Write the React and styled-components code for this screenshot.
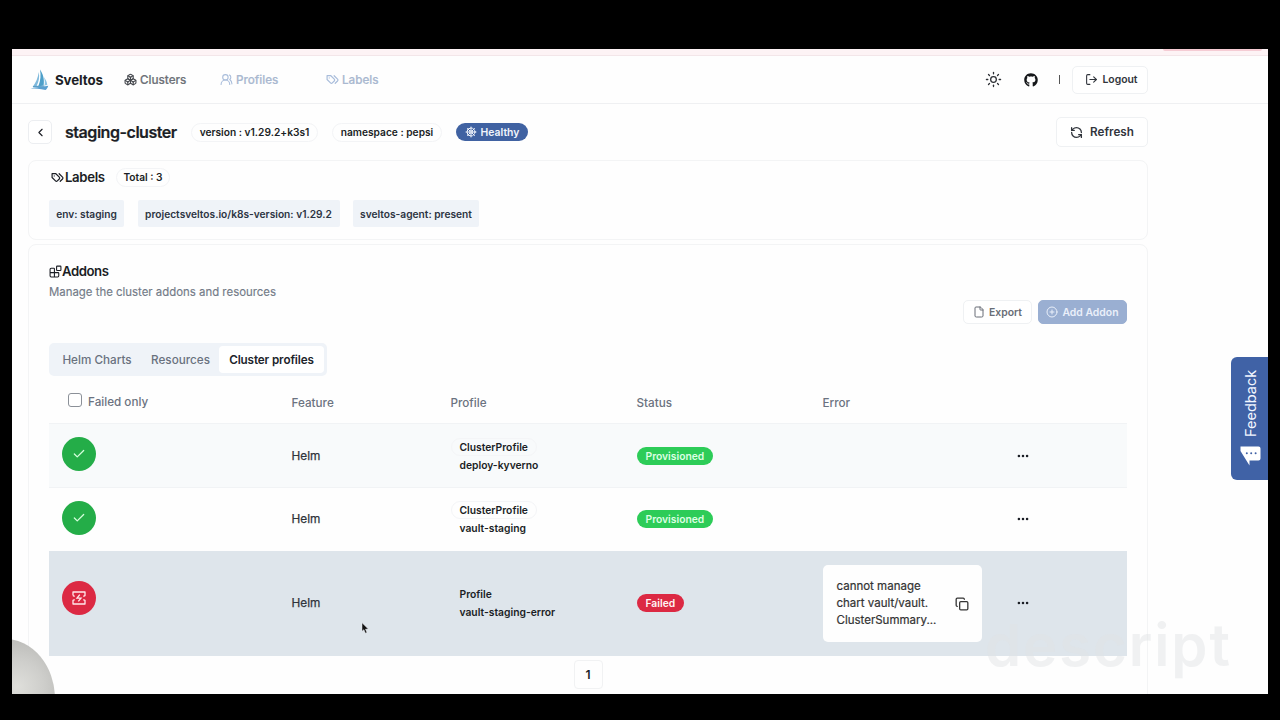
import React, { useState } from "react";
import styled, { createGlobalStyle, css } from "styled-components";
import {
  Blocks,
  Boxes,
  Check,
  ChevronLeft,
  CirclePlus,
  Copy,
  Ellipsis,
  File,
  LogOut,
  RefreshCcw,
  ShipWheel,
  Sun,
  UsersRound,
} from "lucide-react";
import { FaGithub } from "react-icons/fa";

const navLinks = [
  { name: "Clusters", icon: Boxes, width: 96, active: true },
  { name: "Profiles", icon: UsersRound, width: 106 },
  { name: "Labels", icon: TagsIcon, width: 60 },
];

const labels = [
  { text: "env: staging", width: 75 },
  { text: "projectsveltos.io/k8s-version: v1.29.2", width: 202 },
  { text: "sveltos-agent: present", width: 126 },
];

const tabs = [
  { name: "Helm Charts", width: 90 },
  { name: "Resources", width: 77 },
  { name: "Cluster profiles", width: 105 },
];

const rows = [
  { id: 1, feature: "Helm", kind: "ClusterProfile", name: "deploy-kyverno", status: "Provisioned" },
  { id: 2, feature: "Helm", kind: "ClusterProfile", name: "vault-staging", status: "Provisioned" },
  { id: 3, feature: "Helm", kind: "Profile", name: "vault-staging-error", status: "Failed" },
];

function TagsIcon({ size = 13 }) {
  return (
    <svg
      width={size}
      height={size}
      viewBox="0 0 24 24"
      fill="none"
      stroke="currentColor"
      strokeWidth="2.2"
      strokeLinecap="round"
      strokeLinejoin="round"
    >
      <path d="M9 5H2v7l6.290 6.290c.94.94 2.480.94 3.420 0l3.580-3.580c.94-.94.94-2.480 0-3.420L9 5Z" />
      <path d="M6 9.010V9" />
      <path d="m15 5 6.300 6.300a2.400 2.400 0 0 1 0 3.400L17 19" />
    </svg>
  );
}

function SailLogo() {
  return (
    <svg width="19" height="22" viewBox="0 0 19 22" fill="none">
      <path d="M10 0.500C13 5 14.600 10 13.600 16.500L8.200 17.500C10.800 11.500 11 6 10 0.500Z" fill="#4d9fc9" />
      <path d="M8.800 3C9.600 8 9 12.500 6.400 17.400L2.600 18C6 13.500 8 8.500 8.800 3Z" fill="#7fb9dc" />
      <path d="M13.800 8C15.800 10.500 17 13 17.300 16L14.500 16.400C15.200 13.500 14.800 11 13.800 8Z" fill="#8cc3e2" />
      <path d="M0.500 19.500C6 17.500 12 18.500 18.300 16.800C17.600 19 16.500 20.500 15.400 21C10 19.500 5 19.800 0.500 19.500Z" fill="#5a9fd0" />
      <path d="M3 17.600L14.400 17.200" stroke="#5a9fc8" strokeWidth="1.200" />
    </svg>
  );
}

function FeedbackIcon() {
  return (
    <svg width="21" height="20" viewBox="0 0 21 20">
      <path d="M0.500 0.500H18.500A2 2 0 0 1 20.500 2.500V12.500A2 2 0 0 1 18.500 14.500H9.500V19.500L0.500 5Z" fill="#fff" />
      <circle cx="6.800" cy="7.300" r="1" fill="#4062a6" />
      <circle cx="11.200" cy="7.300" r="1" fill="#4062a6" />
      <circle cx="15.600" cy="7.300" r="1" fill="#4062a6" />
    </svg>
  );
}

function FailedIcon() {
  return (
    <svg width="14" height="14" viewBox="0 0 14 14" fill="none" stroke="#ffe9ec" strokeWidth="1.300">
      <path d="M1 4.600V1H13V4.600L11.300 5.400M11.300 8.600L13 9.400V13H1V9.400L2.700 8.600M2.700 5.400L1 4.600" strokeLinejoin="round" />
      <path d="M7.800 3.700L5 7.200H9L6.300 10.400" />
    </svg>
  );
}

function AddonRow({ row }) {
  const failed = row.status === "Failed";
  return (
    <TableRow $variant={failed ? "failed" : row.id === 1 ? "striped" : "plain"}>
      <StateIcon $failed={failed}>
        {failed ? <FailedIcon /> : <Check size={14} strokeWidth={2.2} />}
      </StateIcon>
      <Feature>{row.feature}</Feature>
      <ProfileCell>
        <ProfileBadge $outlined={!failed}>{row.kind}</ProfileBadge>
        <ProfileBadge>{row.name}</ProfileBadge>
      </ProfileCell>
      <div>
        <Status $failed={failed}>{row.status}</Status>
      </div>
      <div>
        {failed && (
          <ErrorCard>
            <p>
              cannot manage
              <br />
              chart vault/vault.
              <br />
              ClusterSummary...
            </p>
            <Copy size={14} strokeWidth={2.2} />
          </ErrorCard>
        )}
      </div>
      <RowMenu type="button">
        <Ellipsis size={14} strokeWidth={2.4} />
      </RowMenu>
    </TableRow>
  );
}

function App() {
  const [activeTab, setActiveTab] = useState("Cluster profiles");

  return (
    <>
      <GlobalStyle />
      <Frame>
        <Screen>
          <BrowserEdge>
            <span />
          </BrowserEdge>
          <Header>
            <Brand>
              <SailLogo />
              <strong>Sveltos</strong>
            </Brand>
            <nav>
              {navLinks.map(({ name, icon: Icon, width, active }) => (
                <NavLink key={name} $width={width} $active={active}>
                  <Icon size={13} />
                  {name}
                </NavLink>
              ))}
            </nav>
            <HeaderActions>
              <Sun size={17} strokeWidth={1.8} />
              <FaGithub size={14} />
              <i />
              <Button $width={76} $height={28}>
                <LogOut size={13} />
                Logout
              </Button>
            </HeaderActions>
          </Header>

          <Page>
            <TitleBar>
              <BackButton type="button">
                <ChevronLeft size={13} />
              </BackButton>
              <h1>staging-cluster</h1>
              <Pill $width={127}>version : v1.29.2+k3s1</Pill>
              <Pill $width={110}>namespace : pepsi</Pill>
              <Healthy>
                <ShipWheel size={12} />
                Healthy
              </Healthy>
              <Button className="refresh" $width={92} $height={30} $large>
                <RefreshCcw size={13} strokeWidth={2.4} />
                Refresh
              </Button>
            </TitleBar>

            <LabelsCard>
              <div className="heading">
                <TagsIcon size={13} />
                <h2>Labels</h2>
                <Pill $width={54}>Total : 3</Pill>
              </div>
              <div className="labels">
                {labels.map((label) => (
                  <Label key={label.text} $width={label.width}>
                    {label.text}
                  </Label>
                ))}
              </div>
            </LabelsCard>

            <AddonsCard>
              <AddonsTitle>
                <Blocks size={13} />
                <h2>Addons</h2>
              </AddonsTitle>
              <Description>Manage the cluster addons and resources</Description>
              <AddonActions>
                <Button $width={69} $height={24} $muted>
                  <File size={12} />
                  Export
                </Button>
                <Button $width={89} $height={24} $primary>
                  <CirclePlus size={12} />
                  Add Addon
                </Button>
              </AddonActions>
              <TabList>
                {tabs.map((tab) => (
                  <Tab
                    key={tab.name}
                    type="button"
                    $width={tab.width}
                    $active={tab.name === activeTab}
                    onClick={() => setActiveTab(tab.name)}
                  >
                    {tab.name}
                  </Tab>
                ))}
              </TabList>

              <TableHead>
                <FailedOnly>
                  <input type="checkbox" />
                  <span>Failed only</span>
                </FailedOnly>
                <span>Feature</span>
                <span>Profile</span>
                <span>Status</span>
                <span>Error</span>
              </TableHead>
              {rows.map((row) => (
                <AddonRow key={row.id} row={row} />
              ))}
              <Pagination>
                <span>1</span>
              </Pagination>
            </AddonsCard>
          </Page>

          <Feedback>
            <span>Feedback</span>
            <FeedbackIcon />
          </Feedback>
          <Bubble />
          <Watermark>descript</Watermark>
          <Cursor width="8" height="12" viewBox="0 0 8 12">
            <path d="M1 0.800V9.300L2.900 7.700L4.400 11.200L6 10.500L4.500 7.200L7.300 7.100Z" fill="#111" stroke="#eef1f4" strokeWidth="0.500" />
          </Cursor>
        </Screen>
      </Frame>
    </>
  );
}

export default App;

const GlobalStyle = createGlobalStyle`
  * {
    box-sizing: border-box;
  }
  body {
    margin: 0;
    background: #000;
    font-family: Inter, "Liberation Sans", sans-serif;
    color: #1b1e25;
  }
  h1, h2, p {
    margin: 0;
  }
  button {
    font-family: inherit;
    padding: 0;
    cursor: pointer;
  }
  svg {
    flex-shrink: 0;
  }
`;

const Frame = styled.div`
  width: 1280px;
  height: 720px;
  padding: 49px 12px 26px;
  background: #000;
`;

const Screen = styled.main`
  position: relative;
  height: 645px;
  overflow: hidden;
  background: #fefefe;
`;

const BrowserEdge = styled.div`
  display: flex;
  justify-content: flex-end;
  height: 7px;
  padding-right: 6px;
  background: #fdf3f5;
  border-bottom: 1px solid #f3e6e9;

  span {
    width: 99px;
    height: 2px;
    background: #f5ccd4;
    border-radius: 0 0 4px 4px;
  }
`;

const Header = styled.header`
  display: flex;
  align-items: center;
  height: 48px;
  padding: 0 120px 0 18px;
  border-bottom: 1px solid #eff0f2;

  nav {
    display: flex;
    margin-left: 21px;
  }
`;

const Brand = styled.div`
  display: flex;
  align-items: center;
  gap: 6px;
  width: 73px;

  strong {
    font-size: 13.300px;
    font-weight: 700;
    letter-spacing: -0.100px;
  }
`;

const NavLink = styled.a`
  display: flex;
  align-items: center;
  gap: 3px;
  width: ${({ $width }) => $width}px;
  font-size: 11.700px;
  font-weight: 500;
  color: ${({ $active }) => ($active ? "#6d7178" : "#a9b8d0")};
  -webkit-text-stroke: 0.200px;

  svg {
    color: ${({ $active }) => ($active ? "#44474d" : "#a9bddb")};
  }
`;

const HeaderActions = styled.div`
  display: flex;
  align-items: center;
  margin-left: auto;
  color: #2c2f34;

  svg:nth-child(2) {
    margin-left: 22px;
    color: #15171a;
  }
  i {
    width: 1px;
    height: 9px;
    margin: 0 12px 0 21px;
    background: #555;
  }
`;

const Button = styled.button.attrs({ type: "button" })`
  display: flex;
  align-items: center;
  justify-content: center;
  gap: ${({ $large }) => ($large ? 7 : 4)}px;
  width: ${({ $width }) => $width}px;
  height: ${({ $height }) => $height}px;
  border: 1px solid #eff1f3;
  border-radius: 5px;
  background: #fff;
  color: #31353c;
  font-size: ${({ $large }) => ($large ? 11.7 : 10.4)}px;
  font-weight: 600;

  ${({ $muted }) => $muted && css`
    color: #686d76;
  `}
  ${({ $primary }) => $primary && css`
    border-color: #9aafd2;
    background: #9aafd2;
    color: #eaf0fa;
  `}

  ${HeaderActions} & {
    padding-left: 3px;
  }
`;

const Page = styled.div`
  padding: 12px 120px 0 16px;
`;

const TitleBar = styled.div`
  display: flex;
  align-items: center;
  height: 32px;

  h1 {
    width: 126px;
    margin-left: 13px;
    font-size: 16.100px;
    font-weight: 600;
    letter-spacing: -0.500px;
    white-space: nowrap;
    -webkit-text-stroke: 0.200px;
  }
  .refresh {
    margin-left: auto;
  }
`;

const BackButton = styled.button`
  display: flex;
  align-items: center;
  justify-content: center;
  width: 24px;
  height: 24px;
  border: 1px solid #eceef1;
  border-radius: 5px;
  background: #fff;
  color: #1b1e25;
`;

const Pill = styled.span`
  display: flex;
  align-items: center;
  justify-content: center;
  width: ${({ $width }) => $width}px;
  height: 19px;
  margin-right: 14px;
  border: 1px solid #f3f4f6;
  border-radius: 10px;
  font-size: 10.200px;
  font-weight: 600;
  white-space: nowrap;
`;

const Healthy = styled.span`
  display: flex;
  align-items: center;
  justify-content: center;
  gap: 4px;
  width: 72px;
  height: 18px;
  border-radius: 9px;
  background: #4062a2;
  color: #f0f4fb;
  font-size: 10.400px;
  font-weight: 600;
`;

const Card = styled.section`
  border: 1px solid #f3f4f5;
  border-radius: 8px;
`;

const LabelsCard = styled(Card)`
  height: 80px;
  margin-top: 12px;
  padding: 6px 20px;

  .heading {
    display: flex;
    align-items: center;
    height: 20px;
    padding-left: 2px;
  }
  h2 {
    width: 51px;
    margin-left: 1px;
    font-size: 13.200px;
    font-weight: 600;
    letter-spacing: -0.350px;
  }
  .labels {
    display: flex;
    gap: 13.500px;
    margin-top: 13px;
  }
`;

const Label = styled.span`
  display: flex;
  align-items: center;
  justify-content: center;
  width: ${({ $width }) => $width}px;
  height: 27px;
  border-radius: 2px;
  background: #eff3f8;
  font-size: 10.200px;
  font-weight: 600;
  color: #2c3442;
  white-space: nowrap;
`;

const AddonsCard = styled(Card)`
  height: 470px;
  margin-top: 4px;
  padding: 16px 20px 0;
`;

const AddonsTitle = styled.div`
  display: flex;
  align-items: center;
  height: 20px;

  h2 {
    font-size: 13.200px;
    font-weight: 600;
    letter-spacing: -0.450px;
  }
`;

const Description = styled.p`
  margin-top: 3px;
  height: 16px;
  font-size: 11.420px;
  line-height: 16px;
  color: #737b88;
  -webkit-text-stroke: 0.150px;
`;

const AddonActions = styled.div`
  display: flex;
  justify-content: flex-end;
  gap: 6px;
`;

const TabList = styled.div`
  display: flex;
  align-items: center;
  width: 278px;
  height: 33px;
  margin-top: 19px;
  padding: 0 3px;
  border-radius: 5px;
  background: #eff3f8;
`;

const Tab = styled.button`
  width: ${({ $width }) => $width}px;
  height: 27px;
  border: 0;
  border-radius: 4px;
  background: ${({ $active }) => ($active ? "#fff" : "transparent")};
  color: ${({ $active }) => ($active ? "#20242b" : "#69717e")};
  font-size: 11.700px;
  font-weight: ${({ $active }) => ($active ? 600 : 500)};
  letter-spacing: ${({ $active }) => ($active ? -0.12 : 0)}px;
  white-space: nowrap;
`;

const columns = css`
  display: grid;
  grid-template-columns: 229.500px 159px 186px 186px 188px 1fr;
  align-items: center;
  padding-left: 13px;
`;

const TableHead = styled.div`
  ${columns}
  height: 48px;
  border-bottom: 1px solid #f1f3f5;
  color: #6b7280;
  font-size: 11.700px;
  font-weight: 500;

  > span {
    padding-top: 7px;
  }
`;

const FailedOnly = styled.label`
  display: flex;
  align-items: center;
  padding: 4px 0 0 6px;

  input {
    appearance: none;
    width: 14px;
    height: 14px;
    margin: -3px 6px 0 0;
    border: 1px solid #8b9098;
    border-radius: 3px;
    background: #fff;
  }
`;

const rowVariants = {
  striped: css`
    height: 64px;
    background: #f8fafb;
    border-bottom: 1px solid #f1f3f5;
  `,
  plain: css`
    height: 62.500px;
  `,
  failed: css`
    height: 105.500px;
    background: #dee5eb;
  `,
};

const TableRow = styled.div`
  ${columns}
  ${({ $variant }) => rowVariants[$variant]}
  font-size: 11.800px;
`;

const StateIcon = styled.span`
  display: flex;
  align-items: center;
  justify-content: center;
  width: 34px;
  height: 34px;
  margin-bottom: ${({ $failed }) => ($failed ? 11 : 3)}px;
  border-radius: 50%;
  background: ${({ $failed }) => ($failed ? "#dc2943" : "#24ad48")};
  color: #d5ffdc;
`;

const Feature = styled.span`
  color: #30343b;
  -webkit-text-stroke: 0.250px;
`;

const ProfileCell = styled.div`
  display: flex;
  flex-direction: column;
  align-items: flex-start;
`;

const ProfileBadge = styled.span`
  height: 18px;
  padding: 0 8px;
  border: 1px solid ${({ $outlined }) => ($outlined ? "#f4f5f7" : "transparent")};
  border-radius: 9px;
  font-size: 10.300px;
  font-weight: 600;
  line-height: 17px;
`;

const Status = styled.span`
  display: inline-block;
  height: 18px;
  padding: 0 9px;
  border-radius: 9px;
  background: ${({ $failed }) => ($failed ? "#dc2943" : "#2dcc58")};
  color: ${({ $failed }) => ($failed ? "#fff3f4" : "#dcffe3")};
  font-size: 10.300px;
  font-weight: 600;
  line-height: 18px;
`;

const ErrorCard = styled.div`
  display: flex;
  align-items: center;
  justify-content: space-between;
  width: 159px;
  height: 77px;
  padding: 1px 13px 0 14px;
  border-radius: 5px;
  background: #fefefe;
  color: #333;

  p {
    font-size: 11.500px;
    line-height: 17px;
    -webkit-text-stroke: 0.200px;
  }
`;

const RowMenu = styled.button`
  display: flex;
  justify-self: start;
  margin-left: 5px;
  border: 0;
  background: none;
  color: #1b1e25;
`;

const Pagination = styled.div`
  display: flex;
  justify-content: center;
  padding-top: 4px;

  span {
    width: 29px;
    height: 29px;
    border: 1px solid #f1f2f3;
    border-radius: 4px;
    font-size: 12px;
    font-weight: 600;
    line-height: 28px;
    text-align: center;
  }
`;

/* everything below floats over the page */
const Feedback = styled.button`
  position: absolute;
  right: 0;
  top: 308px;
  display: flex;
  flex-direction: column;
  align-items: center;
  gap: 9px;
  width: 37px;
  height: 123px;
  padding: 13px 0 0 2px;
  border: 0;
  border-radius: 6px 0 0 6px;
  background: #4062a6;
  color: #f2f6ff;

  span {
    height: 67px;
    font-size: 14.500px;
    line-height: 18px;
    writing-mode: vertical-rl;
    transform: rotate(180deg);
  }
`;

const Bubble = styled.div`
  position: absolute;
  left: -57px;
  top: 590px;
  width: 100px;
  height: 120px;
  border-radius: 50%;
  background: radial-gradient(circle at 62% 40%, #dfdfdb 0, #cececb 28%, #b5b5b2 60%);
`;

const Watermark = styled.div`
  position: absolute;
  left: 973px;
  top: 564px;
  font-family: Inter, sans-serif;
  font-size: 58px;
  font-weight: 600;
  line-height: 64px;
  letter-spacing: 1.900px;
  color: rgba(223, 226, 228, 0.45);
`;

const Cursor = styled.svg`
  position: absolute;
  left: 349px;
  top: 573px;
`;
